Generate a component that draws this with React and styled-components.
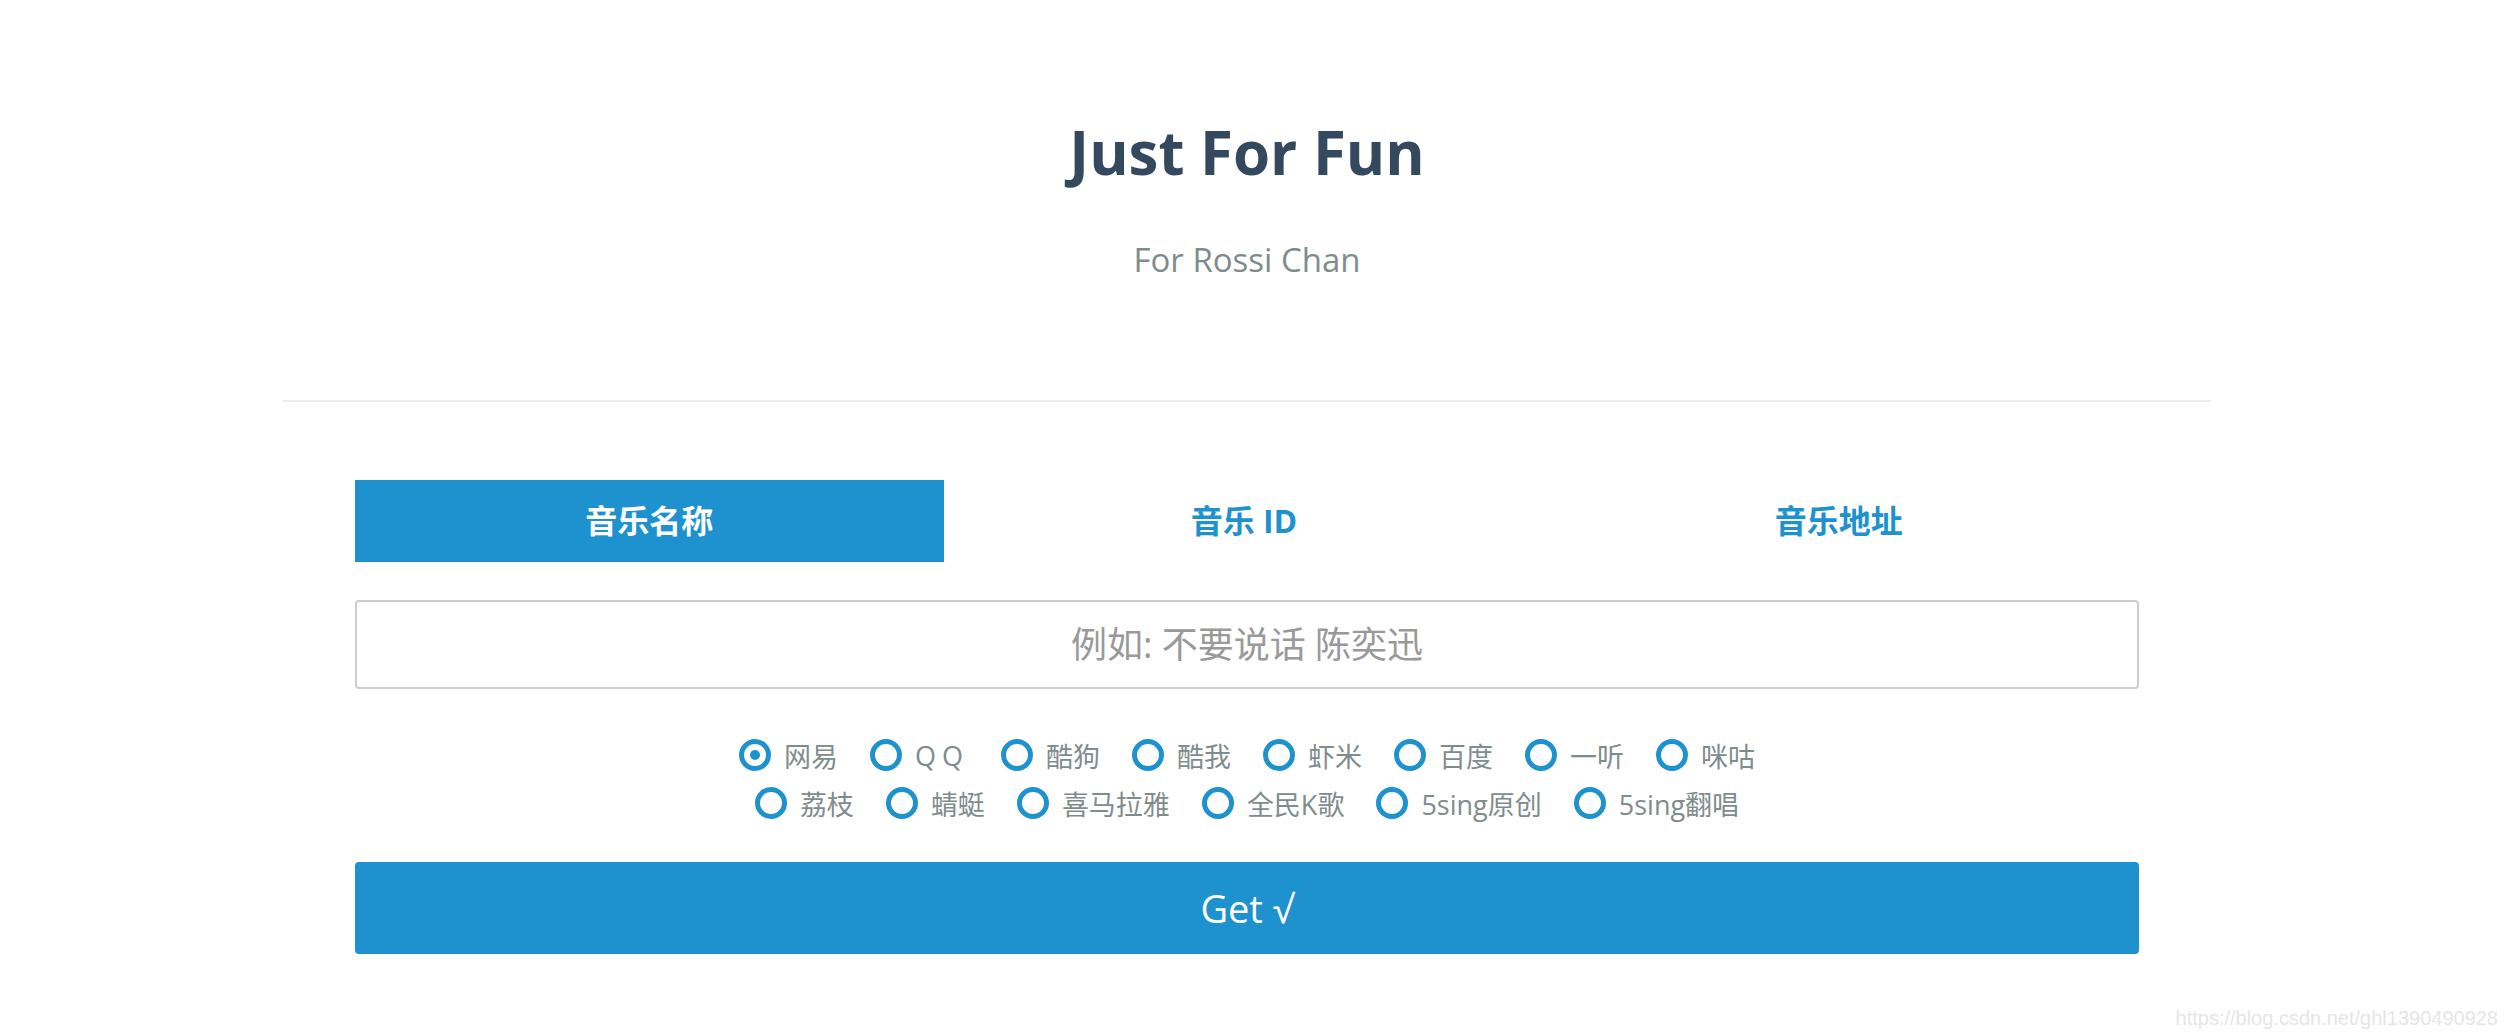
import React, { useState } from "react";
import styled, { createGlobalStyle } from "styled-components";

const BLUE = "#1e91cf";

const GlobalStyle = createGlobalStyle`
  html, body {
    margin: 0;
    padding: 0;
    background: #ffffff;
  }
  body {
    font-family: "Open Sans", "Noto Sans CJK SC", sans-serif;
  }
`;

// Page wrapper (leaves room on the right like the original scrollbar gutter)
const Page = styled.div`
  position: relative;
  min-height: 1036px;
  padding-right: 12px;
  box-sizing: border-box;
`;

const Container = styled.div`
  width: 1928px;
  margin: 0 auto;
`;

// Header
const Header = styled.header`
  text-align: center;
  padding-top: 112px;
`;

const Title = styled.h1`
  margin: 0;
  font-size: 60px;
  line-height: 80px;
  font-weight: 700;
  color: #34495e;
`;

const Subtitle = styled.p`
  margin: 48px 0 0;
  font-size: 33px;
  line-height: 40px;
  color: #7f8c8d;
`;

const Divider = styled.hr`
  margin: 120px 0 0;
  border: 0;
  height: 2px;
  background: #eeeeee;
`;

// Form
const Form = styled.div`
  margin: 78px 72px 0;
`;

const Tabs = styled.div`
  display: grid;
  grid-template-columns: repeat(3, 1fr);
`;

const Tab = styled.button`
  height: 82px;
  margin-right: 6px;
  border: 0;
  padding: 0 0 4px;
  cursor: pointer;
  font-family: inherit;
  font-size: 32px;
  font-weight: 700;
  background: ${({ $active }) => ($active ? BLUE : "transparent")};
  color: ${({ $active }) => ($active ? "#ffffff" : BLUE)};
`;

const SearchInput = styled.input`
  display: block;
  width: 100%;
  height: 89px;
  margin-top: 38px;
  box-sizing: border-box;
  border: 2px solid #cccccc;
  border-radius: 4px;
  padding: 0 20px;
  font-family: inherit;
  font-size: 36px;
  text-align: center;
  color: #333;
  outline: none;

  &::placeholder {
    color: #999999;
  }
`;

const Sources = styled.div`
  margin-top: 42px;
`;

const SourceRow = styled.div`
  display: flex;
  justify-content: center;
  gap: 32px;
  height: 48px;
  align-items: center;
`;

const RadioItem = styled.label`
  display: flex;
  align-items: center;
  gap: 13px;
  cursor: pointer;
  font-size: 27px;
  color: #7f8c8d;
  letter-spacing: ${({ $spaced }) => ($spaced ? "6px" : "0")};
`;

const Circle = styled.span`
  position: relative;
  width: 32px;
  height: 32px;
  box-sizing: border-box;
  border: 5px solid ${BLUE};
  border-radius: 50%;
  flex-shrink: 0;

  &::after {
    content: "";
    display: ${({ $checked }) => ($checked ? "block" : "none")};
    position: absolute;
    left: 6px;
    top: 6px;
    width: 10px;
    height: 10px;
    border-radius: 50%;
    background: ${BLUE};
  }
`;

const GetButton = styled.button`
  display: block;
  width: 100%;
  height: 92px;
  margin-top: 35px;
  border: 0;
  border-radius: 4px;
  background: ${BLUE};
  color: #ffffff;
  font-family: inherit;
  font-size: 38px;
  cursor: pointer;
`;

const Watermark = styled.div`
  position: absolute;
  right: 8px;
  bottom: 6px;
  font-family: "Liberation Sans", Arial, sans-serif;
  font-size: 20px;
  color: #e6e6e6;
`;

const TABS = ["音乐名称", "音乐 ID", "音乐地址"];

const ROW_ONE = [
  { id: "netease", label: "网易" },
  { id: "qq", label: "QQ", spaced: true },
  { id: "kugou", label: "酷狗" },
  { id: "kuwo", label: "酷我" },
  { id: "xiami", label: "虾米" },
  { id: "baidu", label: "百度" },
  { id: "1ting", label: "一听" },
  { id: "migu", label: "咪咕" },
];

const ROW_TWO = [
  { id: "lizhi", label: "荔枝" },
  { id: "qingting", label: "蜻蜓" },
  { id: "ximalaya", label: "喜马拉雅" },
  { id: "kg", label: "全民K歌" },
  { id: "5singyc", label: "5sing原创" },
  { id: "5singfc", label: "5sing翻唱" },
];

const App = () => {
  const [tab, setTab] = useState(0);
  const [source, setSource] = useState("netease");

  const renderRow = (items) => (
    <SourceRow>
      {items.map((item) => (
        <RadioItem
          key={item.id}
          $spaced={item.spaced}
          onClick={() => setSource(item.id)}
        >
          <Circle $checked={source === item.id} />
          <span>{item.label}</span>
        </RadioItem>
      ))}
    </SourceRow>
  );

  return (
    <Page>
      <GlobalStyle />
      <Container>
        <Header>
          <Title>Just For Fun</Title>
          <Subtitle>For Rossi Chan</Subtitle>
        </Header>
        <Divider />

        <Form>
          <Tabs>
            {TABS.map((name, i) => (
              <Tab key={name} $active={tab === i} onClick={() => setTab(i)}>
                {name}
              </Tab>
            ))}
          </Tabs>

          <SearchInput placeholder="例如: 不要说话 陈奕迅" />

          <Sources>
            {renderRow(ROW_ONE)}
            {renderRow(ROW_TWO)}
          </Sources>

          <GetButton>Get √</GetButton>
        </Form>
      </Container>
      <Watermark>https://blog.csdn.net/ghl1390490928</Watermark>
    </Page>
  );
};

export default App;
